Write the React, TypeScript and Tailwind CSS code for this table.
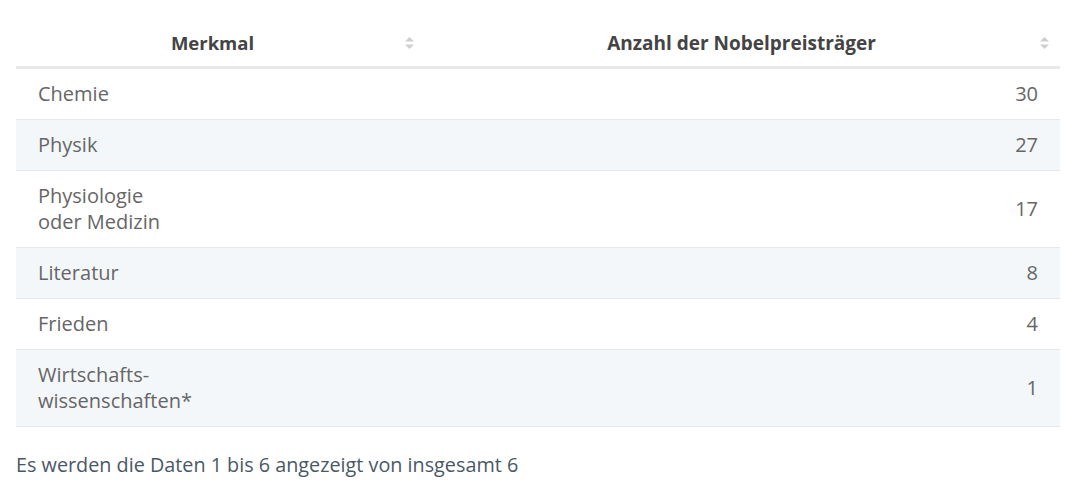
import React from 'react'

const rows: { label: string[]; value: number }[] = [
  { label: ['Chemie'], value: 30 },
  { label: ['Physik'], value: 27 },
  { label: ['Physiologie', 'oder Medizin'], value: 17 },
  { label: ['Literatur'], value: 8 },
  { label: ['Frieden'], value: 4 },
  { label: ['Wirtschafts-', 'wissenschaften*'], value: 1 },
]

function SortIcon() {
  return (
    <svg width="11" height="14" viewBox="0 0 11 14" className="shrink-0">
      <path d="M1 5.5 L5.5 1 L10 5.5 Z" fill="#cfcfcf" />
      <path d="M1 8.5 L5.5 13 L10 8.5 Z" fill="#cfcfcf" />
    </svg>
  )
}

export default function App() {
  return (
    <div
      className="w-[1080px] h-[495px] bg-white pl-4 pr-5"
      style={{ fontFamily: "'Open Sans', 'Noto Sans', sans-serif" }}
    >
      <table className="w-full border-collapse">
        <thead>
          <tr className="border-b-[3px] border-[#e9e9e9]">
            <th className="w-[410px] pt-[29px] pb-[9px] pl-[5px] pr-[11px] text-[18.5px] leading-[28px] font-bold text-[#444]">
              <div className="flex items-center">
                <span className="flex-1 text-center">Merkmal</span>
                <SortIcon />
              </div>
            </th>
            <th className="pt-[29px] pb-[9px] pl-[18px] pr-[10px] text-[19px] leading-[28px] font-bold text-[#444]">
              <div className="flex items-center">
                <span className="flex-1 text-center">Anzahl der Nobelpreisträger</span>
                <SortIcon />
              </div>
            </th>
          </tr>
        </thead>
        <tbody>
          {rows.map((r, i) => (
            <tr key={i} className={`border-b border-[#e6e9ec] ${i % 2 === 1 ? 'bg-[#f4f7fa]' : 'bg-white'}`}>
              <td className="pl-[22px] pt-[12px] pb-[12px] text-[20px] leading-[26px] text-[#666]">
                {r.label.map((l, j) => (
                  <div key={j}>{l}</div>
                ))}
              </td>
              <td className="pr-[22px] pt-[12px] pb-[12px] text-right text-[20px] leading-[26px] text-[#666]">
                {r.value}
              </td>
            </tr>
          ))}
        </tbody>
      </table>
      <p className="mt-[23px] text-[19.8px] leading-[30px] text-[#4a5866]">
        Es werden die Daten 1 bis 6 angezeigt von insgesamt 6
      </p>
    </div>
  )
}
